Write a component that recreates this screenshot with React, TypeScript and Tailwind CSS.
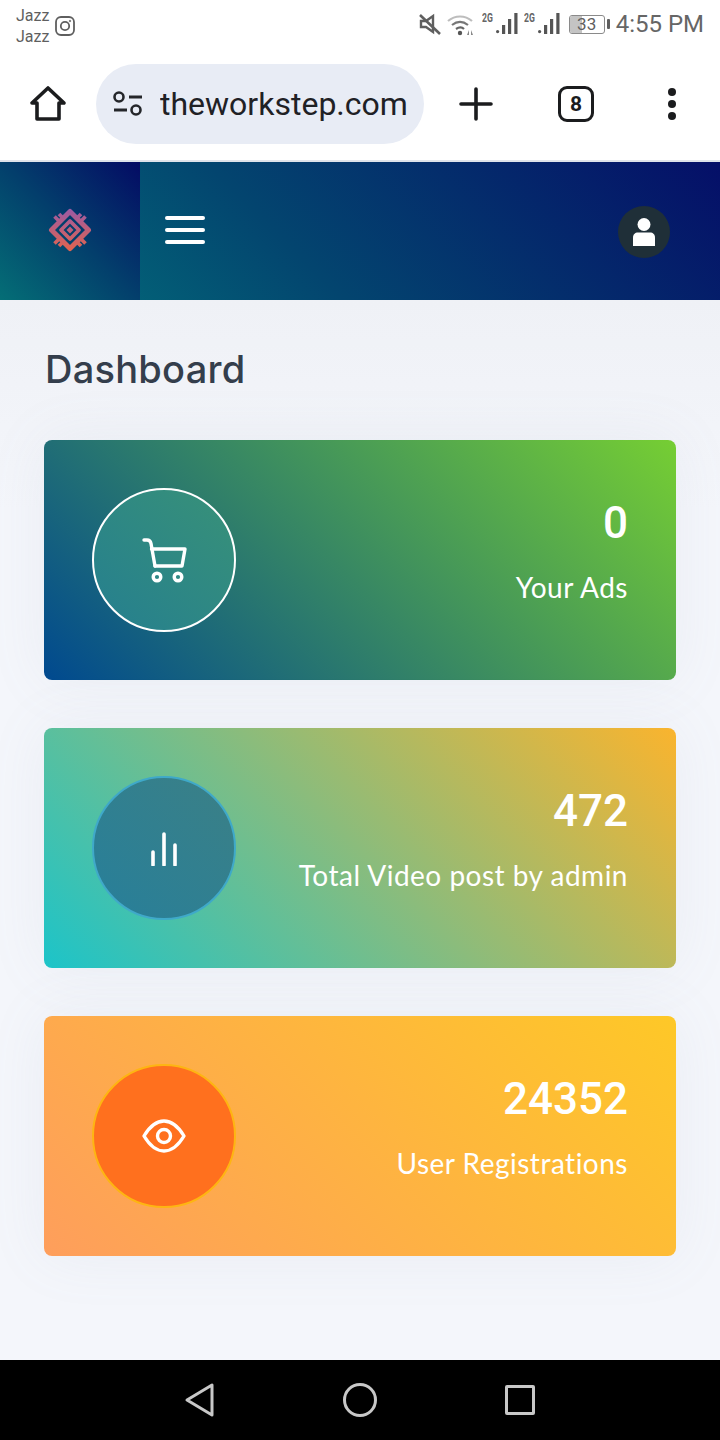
import React from 'react';

/* =======================
   PHONE STATUS BAR
======================= */
const Signal = () => (
  <div className="w-[36px] h-[24px] flex items-start">
    <span className="w-[14px] font-['Roboto',sans-serif] text-[12px] leading-[12px] font-bold text-[#666] text-center scale-x-[0.72] origin-left whitespace-nowrap">2G</span>
    <svg width="22" height="24" viewBox="0 0 22 24">
      <rect x="0" y="18" width="3.200" height="3.200" rx="1.600" fill="#555" />
      <rect x="6" y="13" width="3.200" height="9" fill="#555" />
      <rect x="12" y="7" width="3.200" height="15" fill="#555" />
      <rect x="18.300" y="1" width="3.200" height="21" fill="#555" />
    </svg>
  </div>
);

const StatusBar = () => (
  <div className="h-[48px] bg-white flex items-center justify-between pl-[16px] pr-[16px] font-['Roboto',sans-serif] text-[#5f5f5f]">
    <div className="flex items-center gap-[6px]">
      <div className="text-[16px] leading-[21px] mt-[3px]">
        <div>Jazz</div>
        <div>Jazz</div>
      </div>
      <svg width="20" height="20" viewBox="0 0 20 20" fill="none" stroke="#5f5f5f" strokeWidth="1.8" className="mt-[3px]">
        <rect x="1" y="1" width="18" height="18" rx="5" />
        <circle cx="10" cy="10" r="4.2" />
        <circle cx="15" cy="5" r="0.8" fill="#5f5f5f" strokeWidth="0.6" />
      </svg>
    </div>
    <div className="flex items-center gap-[6px]">
      <svg width="22" height="24" viewBox="0 0 22 24" fill="none" stroke="#5f5f5f" strokeWidth="2.400" className="-mr-[1px]">
        <path d="M2 9h5l7-5v16l-7-5H2z" />
        <path d="M1 3l20 19" strokeWidth="2.600" />
      </svg>
      <svg width="30" height="24" viewBox="0 0 30 24" fill="none">
        <path d="M2 9c7-6 17-6 24 0" stroke="#bdbdbd" strokeWidth="2.200" />
        <path d="M6 13c5-4 11-4 16 0" stroke="#777" strokeWidth="2.200" />
        <path d="M10 17c3-2 6-2 8 0" stroke="#666" strokeWidth="2.200" />
        <circle cx="14" cy="21" r="2.200" fill="#555" />
        <path d="M21 23l2-5v5zM25 18l2 5h-2z" fill="#888" />
      </svg>
      <Signal />
      <Signal />
      <div className="flex items-center ml-[3px]">
        <div className="relative w-[36px] h-[19px] rounded-[3px] border border-[#8a8a8a] overflow-hidden flex items-center justify-center">
          <div className="absolute left-0 top-0 bottom-0 w-[12px] bg-[#c4c4c4]" />
          <span className="relative text-[17px] leading-none text-[#5f5f5f]">33</span>
        </div>
        <div className="w-[3px] h-[10px] ml-[2px] rounded-[1px] bg-[#5f5f5f]" />
      </div>
      <span className="text-[24px] leading-none text-[#666]">4:55 PM</span>
    </div>
  </div>
);

/* =======================
   BROWSER BAR
======================= */
const BrowserBar = () => (
  <div className="h-[114px] bg-white border-b-2 border-[#dfe3ea] flex items-start pt-[16px] font-['Roboto',sans-serif]">
    <div className="w-[96px] h-[80px] flex items-center justify-center">
      <svg width="38" height="38" viewBox="0 0 38 38" fill="none" stroke="#1b1c1e" strokeWidth="3.6" strokeLinejoin="round" strokeLinecap="round">
        <path d="M3 18L19 3l16 15h-5v16H8V18z" />
      </svg>
    </div>
    <div className="w-[328px] h-[80px] rounded-full bg-[#e8ecf5] flex items-center pl-[16px] overflow-hidden">
      <svg width="32" height="28" viewBox="0 0 32 28" fill="none" stroke="#24262a" strokeWidth="3" className="shrink-0">
        <circle cx="7" cy="7" r="4.5" strokeWidth="2.6" />
        <path d="M17 7h13M2 20h13" />
        <circle cx="24" cy="20" r="4.5" strokeWidth="2.6" />
      </svg>
      <span className="ml-[16px] w-[247px] overflow-hidden text-[32px] leading-[40px] text-[#1f2125] whitespace-nowrap">theworkstep.com</span>
    </div>
    <div className="flex-1 h-[80px] flex items-center">
      <div className="w-[104px] flex justify-center">
        <svg width="34" height="34" viewBox="0 0 34 34" stroke="#1b1c1e" strokeWidth="3.6" strokeLinecap="round">
          <path d="M17 2v30M2 17h30" />
        </svg>
      </div>
      <div className="w-[94px] flex justify-center ml-[1px]">
        <div className="w-[36px] h-[36px] rounded-[9px] border-[3.5px] border-[#1b1c1e] flex items-center justify-center text-[21px] font-bold text-[#1b1c1e] leading-none">8</div>
      </div>
      <div className="flex-1 flex flex-col items-center gap-[4px] pl-[1px]">
        <div className="w-[8px] h-[8px] rounded-full bg-[#1b1c1e]" />
        <div className="w-[8px] h-[8px] rounded-full bg-[#1b1c1e]" />
        <div className="w-[8px] h-[8px] rounded-full bg-[#1b1c1e]" />
      </div>
    </div>
  </div>
);

/* =======================
   SITE HEADER
======================= */
const Logo = () => (
  <svg width="44" height="44" viewBox="0 0 44 44" fill="none">
    <defs>
      <linearGradient id="logoGrad" gradientUnits="userSpaceOnUse" x1="0" y1="0" x2="0" y2="44">
        <stop offset="0%" stopColor="#9a5aa6" />
        <stop offset="100%" stopColor="#e2644c" />
      </linearGradient>
    </defs>
    <g stroke="url(#logoGrad)" strokeLinejoin="round">
      <path d="M22 3.500L40.500 22 22 40.500 3.500 22z" strokeWidth="5" />
      <path d="M22 13l9 9-9 9-9-9z" strokeWidth="3.800" />
      <path d="M11.500 13.500l-5-5M15 10l-4-4M29 10l4-4M32.500 13.500l5-5M11.500 30.500l-5 5M15 34l-4 4M29 34l4 4M32.500 30.500l5 5" strokeWidth="3.600" />
    </g>
    <path d="M22 18.500l3.500 3.500-3.500 3.500-3.500-3.500z" fill="url(#logoGrad)" />
  </svg>
);

const SiteHeader = () => (
  <div className="h-[138px] flex bg-[linear-gradient(45deg,#02707c,#03456f_40%,#050f68)]">
    <div className="w-[140px] flex items-center justify-center bg-[linear-gradient(45deg,#046e76,#033f6c_50%,#040b64)] pb-[2px]">
      <Logo />
    </div>
    <div className="flex-1 flex items-center justify-between pl-[25px] pr-[50px]">
      <div className="flex flex-col gap-[8px] mb-[2px]">
        <div className="w-[40px] h-[4px] rounded-full bg-white" />
        <div className="w-[40px] h-[4px] rounded-full bg-white" />
        <div className="w-[40px] h-[4px] rounded-full bg-white" />
      </div>
      <div className="w-[52px] h-[52px] mt-[2px] rounded-full bg-[#1f2f38] flex items-center justify-center">
        <svg width="22" height="28" viewBox="0 0 22 28" fill="white">
          <circle cx="11" cy="6.500" r="6.500" />
          <path d="M5 14.500h12c3 0 5 2 5 5V28H0v-8.500c0-3 2-5 5-5z" />
        </svg>
      </div>
    </div>
  </div>
);

/* =======================
   STAT CARD
======================= */
interface CardProps {
  value: string;
  label: string;
  cardClass: string;
  circleClass: string;
  icon: React.ReactNode;
}

const StatCard: React.FC<CardProps> = ({ value, label, cardClass, circleClass, icon }) => (
  <div className={`h-[240px] rounded-[8px] flex items-center justify-between pl-[48px] pr-[48px] shadow-[0_0_60px_rgba(130,140,170,0.09)] ${cardClass}`}>
    <div className={`w-[144px] h-[144px] rounded-full flex items-center justify-center ${circleClass}`}>
      {icon}
    </div>
    <div className="text-right text-white -mt-[16px]">
      <div className="font-['Roboto',sans-serif] font-medium text-[44px] leading-[48px]">{value}</div>
      <div className="font-['Lato',sans-serif] text-[28px] leading-[36px] mt-[22px] tracking-[0.5px]">{label}</div>
    </div>
  </div>
);

const CartIcon = () => (
  <svg width="48" height="46" viewBox="0 0 48 46" fill="none" stroke="white" strokeWidth="3.400" strokeLinecap="round" strokeLinejoin="round">
    <path d="M4 3h3c2.500 0 3.500 1 4 3.500L15 29" />
    <path d="M11.500 12H45l-3 17H15" />
    <circle cx="17" cy="40" r="3.800" />
    <circle cx="38" cy="40" r="3.800" />
  </svg>
);

const BarsIcon = () => (
  <svg width="28" height="34" viewBox="0 0 28 34" stroke="white" strokeWidth="3.600" strokeLinecap="round" className="mt-[2px]">
    <path d="M3 33V20M14 33V2M25 33V13" />
  </svg>
);

const EyeIcon = () => (
  <svg width="44" height="34" viewBox="0 0 44 34" fill="none" stroke="white" strokeWidth="3.400" strokeLinejoin="round">
    <path d="M2 17C8 7 15 2 22 2s14 5 20 15c-6 10-13 15-20 15S8 27 2 17z" />
    <circle cx="22" cy="17" r="6.500" />
  </svg>
);

/* =======================
   MAIN
======================= */
export default function App() {
  return (
    <div className="w-[720px] h-[1440px] flex flex-col overflow-hidden bg-[#f3f5f9]">
      <StatusBar />
      <BrowserBar />
      <SiteHeader />
      <main className="flex-1 px-[44px] bg-[linear-gradient(#eff1f6,#f4f6fb_20%)]">
        <h1 className="font-['Inter',sans-serif] font-medium text-[38px] leading-[48px] text-[#343e4c] mt-[45px] mb-[47px] ml-[1px] tracking-[0.25px]">Dashboard</h1>
        <div className="flex flex-col gap-[48px]">
          <StatCard
            value="0"
            label="Your Ads"
            cardClass="bg-[linear-gradient(45deg,#00498f,#76ce33)]"
            circleClass="border-2 border-white bg-[linear-gradient(45deg,#257f8f,#389178)]"
            icon={<CartIcon />}
          />
          <StatCard
            value="472"
            label="Total Video post by admin"
            cardClass="bg-[linear-gradient(45deg,#1cc4c9,#fab42e)]"
            circleClass="border-2 border-[#3fa9c9] bg-[linear-gradient(45deg,#277f9a,#3b8086)]"
            icon={<BarsIcon />}
          />
          <StatCard
            value="24352"
            label="User Registrations"
            cardClass="bg-[linear-gradient(45deg,#fe9e5c,#fec827)]"
            circleClass="border-2 border-[#feb512] bg-[#ff701e]"
            icon={<EyeIcon />}
          />
        </div>
      </main>
      <div className="h-[80px] bg-black flex items-center justify-center shrink-0">
        <div className="w-[160px] flex justify-center">
          <svg width="32" height="36" viewBox="0 0 32 36" fill="none" stroke="#c8c8c8" strokeWidth="3" strokeLinejoin="round">
            <path d="M28 3v30L3 18z" />
          </svg>
        </div>
        <div className="w-[160px] flex justify-center">
          <div className="w-[34px] h-[34px] rounded-full border-[3px] border-[#c8c8c8]" />
        </div>
        <div className="w-[160px] flex justify-center">
          <div className="w-[30px] h-[30px] rounded-[2px] border-[3px] border-[#c8c8c8]" />
        </div>
      </div>
    </div>
  );
}
